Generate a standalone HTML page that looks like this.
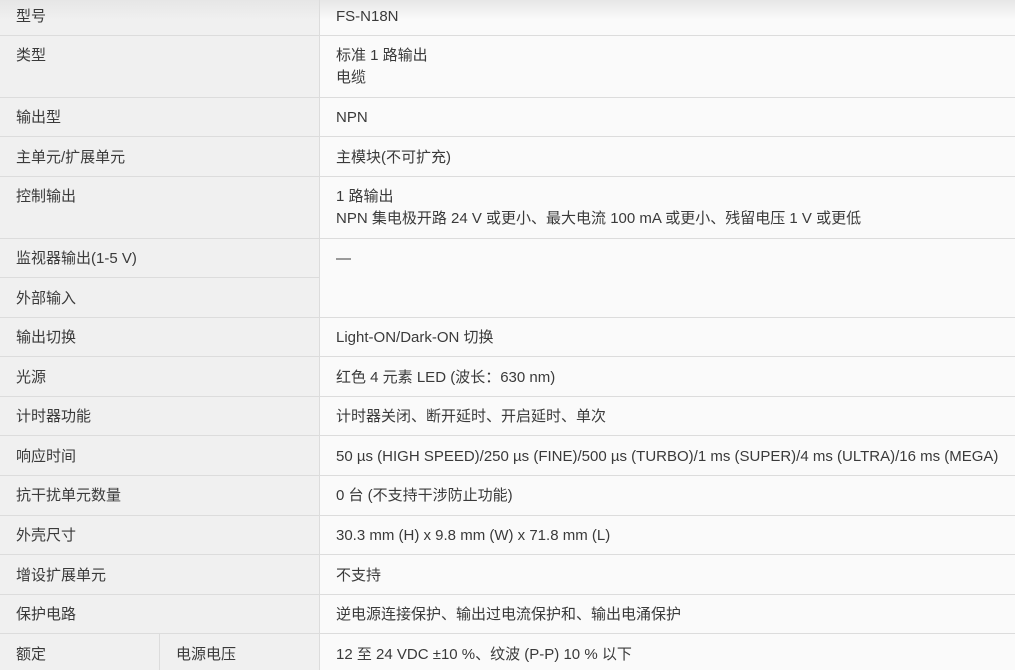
<!DOCTYPE html>
<html><head><meta charset="utf-8"><style>
html,body{margin:0;padding:0;width:1015px;height:670px;overflow:hidden;background:#fafafa}
body{font-family:"Liberation Sans","Noto Sans CJK SC",sans-serif;font-size:15px;color:#3a3a3a;position:relative}
.l{position:absolute;left:0;width:319px;background:#f0f0f0}
.r{position:absolute;left:320px;right:0;background:#fafafa}
.vl{position:absolute;left:319px;top:0;width:1px;height:670px;background:#dcdcdc}
.h{position:absolute;height:1px;background:#dcdcdc}
.t{position:absolute;line-height:22px;white-space:nowrap;margin-top:2px}
.shade{position:absolute;left:0;top:0;width:1015px;height:20px;background:linear-gradient(#e6e6e6,rgba(240,240,240,0))}
</style></head><body>
<div class="l" style="top:0;height:670px"></div>
<div class="r" style="top:0;height:670px"></div>
<div class="shade"></div>
<div class="vl"></div>
<div class="h" style="left:159px;width:1px;top:634px;height:36px"></div>
<div class="h" style="left:0;right:0;top:35px"></div>
<div class="h" style="left:0;right:0;top:97px"></div>
<div class="h" style="left:0;right:0;top:136px"></div>
<div class="h" style="left:0;right:0;top:176px"></div>
<div class="h" style="left:0;right:0;top:238px"></div>
<div class="h" style="left:0;width:319px;top:277px"></div>
<div class="h" style="left:0;right:0;top:317px"></div>
<div class="h" style="left:0;right:0;top:356px"></div>
<div class="h" style="left:0;right:0;top:396px"></div>
<div class="h" style="left:0;right:0;top:435px"></div>
<div class="h" style="left:0;right:0;top:475px"></div>
<div class="h" style="left:0;right:0;top:515px"></div>
<div class="h" style="left:0;right:0;top:554px"></div>
<div class="h" style="left:0;right:0;top:594px"></div>
<div class="h" style="left:0;right:0;top:633px"></div>

<div class="t" style="left:16px;top:4px">型号</div><div class="t" style="left:336px;top:4px">FS-N18N</div>
<div class="t" style="left:16px;top:43px">类型</div><div class="t" style="left:336px;top:43px">标准 1 路输出<br>电缆</div>
<div class="t" style="left:16px;top:105px">输出型</div><div class="t" style="left:336px;top:105px">NPN</div>
<div class="t" style="left:16px;top:145px">主单元/扩展单元</div><div class="t" style="left:336px;top:145px">主模块(不可扩充)</div>
<div class="t" style="left:16px;top:184px">控制输出</div><div class="t" style="left:336px;top:184px">1 路输出<br>NPN 集电极开路 24 V 或更小、最大电流 100 mA 或更小、残留电压 1 V 或更低</div>
<div class="t" style="left:16px;top:246px">监视器输出(1-5 V)</div><div class="t" style="left:336px;top:246px">—</div>
<div class="t" style="left:16px;top:286px">外部输入</div>
<div class="t" style="left:16px;top:325px">输出切换</div><div class="t" style="left:336px;top:325px">Light-ON/Dark-ON 切换</div>
<div class="t" style="left:16px;top:365px">光源</div><div class="t" style="left:336px;top:365px">红色 4 元素 LED (波长：630 nm)</div>
<div class="t" style="left:16px;top:404px">计时器功能</div><div class="t" style="left:336px;top:404px">计时器关闭、断开延时、开启延时、单次</div>
<div class="t" style="left:16px;top:444px">响应时间</div><div class="t" style="left:336px;top:444px">50 µs (HIGH SPEED)/250 µs (FINE)/500 µs (TURBO)/1 ms (SUPER)/4 ms (ULTRA)/16 ms (MEGA)</div>
<div class="t" style="left:16px;top:483px">抗干扰单元数量</div><div class="t" style="left:336px;top:483px">0 台 (不支持干涉防止功能)</div>
<div class="t" style="left:16px;top:523px">外壳尺寸</div><div class="t" style="left:336px;top:523px">30.3 mm (H) x 9.8 mm (W) x 71.8 mm (L)</div>
<div class="t" style="left:16px;top:563px">增设扩展单元</div><div class="t" style="left:336px;top:563px">不支持</div>
<div class="t" style="left:16px;top:602px">保护电路</div><div class="t" style="left:336px;top:602px">逆电源连接保护、输出过电流保护和、输出电涌保护</div>
<div class="t" style="left:16px;top:642px">额定</div><div class="t" style="left:176px;top:642px">电源电压</div><div class="t" style="left:336px;top:642px">12 至 24 VDC ±10 %、纹波 (P-P) 10 % 以下</div>
</body></html>
